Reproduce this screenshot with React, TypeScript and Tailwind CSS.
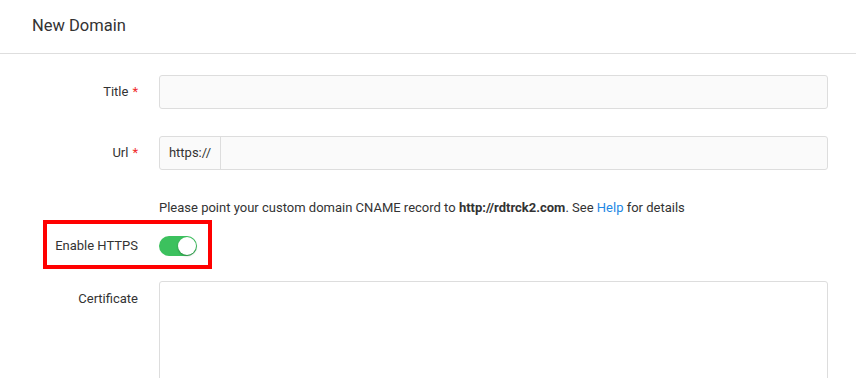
// New Domain form: title/url inputs, CNAME hint, HTTPS toggle and certificate box.
// The red frame around the HTTPS row is an annotation laid over the form.

import { useState } from "react";

function Label({ text, required }: { text: string; required?: boolean }) {
  return (
    <div className="w-[138px] shrink-0 text-right text-[13px] text-[#333]">
      {text}
      {required && <span className="ml-1 text-[#f02b2b]">*</span>}
    </div>
  );
}

export default function App() {
  const [https, setHttps] = useState(true);

  return (
    <div className="w-[856px] h-[378px] overflow-hidden bg-white font-['Roboto',sans-serif] text-[#333]">
      {/* Header */}
      <div className="h-[54px] flex items-center px-8 border-b border-[#dedede]">
        <h1 className="text-[16.5px] text-[#333]">New Domain</h1>
      </div>

      {/* Form */}
      <div className="relative flex flex-col pt-[21px] pr-[28px]">
        <div className="flex items-center gap-[21px]">
          <Label text="Title" required />
          <input className="flex-1 h-[34px] rounded-[3px] border border-[#dddddd] bg-[#fafafa] px-3 text-[13px] outline-none" />
        </div>

        <div className="flex items-center gap-[21px] mt-[27px]">
          <Label text="Url" required />
          <div className="flex-1 flex h-[34px] rounded-[3px] border border-[#dddddd] bg-[#fafafa]">
            <span className="w-[61px] flex items-center justify-center border-r border-[#dddddd] text-[13px] text-[#333]">
              https://
            </span>
            <input className="flex-1 bg-transparent px-3 text-[13px] outline-none" />
          </div>
        </div>

        <div className="flex gap-[21px] mt-[28px]">
          <div className="w-[138px] shrink-0" />
          <p className="text-[13px] text-[#333]">
            Please point your custom domain CNAME record to <b>http://rdtrck2.com</b>. See{" "}
            <a className="text-[#1e88e5]">Help</a> for details
          </p>
        </div>

        <div className="relative flex items-center gap-[21px] mt-[13px] h-[30px]">
          <Label text="Enable HTTPS" />
          <button
            onClick={() => setHttps(!https)}
            className={[
              "relative w-[38px] h-[20px] rounded-full transition-colors",
              https ? "bg-[#3cc15e]" : "bg-[#ccc]",
            ].join(" ")}
          >
            <span
              className={[
                "absolute top-[1px] w-[18px] h-[18px] rounded-full bg-white shadow-[0_1px_2px_rgba(0,0,0,0.3)] transition-all",
                https ? "left-[19px]" : "left-[1px]",
              ].join(" ")}
            />
          </button>
          {/* annotation frame */}
          <div className="absolute left-[43px] top-[-11px] w-[169px] h-[49px] border-[4px] border-[#ff0000] pointer-events-none" />
        </div>

        <div className="flex items-start gap-[21px] mt-[20px]">
          <div className="w-[138px] shrink-0 text-right text-[13px] text-[#333] pt-[8px]">Certificate</div>
          <textarea className="flex-1 h-[140px] rounded-[3px] border border-[#dddddd] bg-white p-3 text-[13px] outline-none resize-none" />
        </div>
      </div>
    </div>
  );
}
